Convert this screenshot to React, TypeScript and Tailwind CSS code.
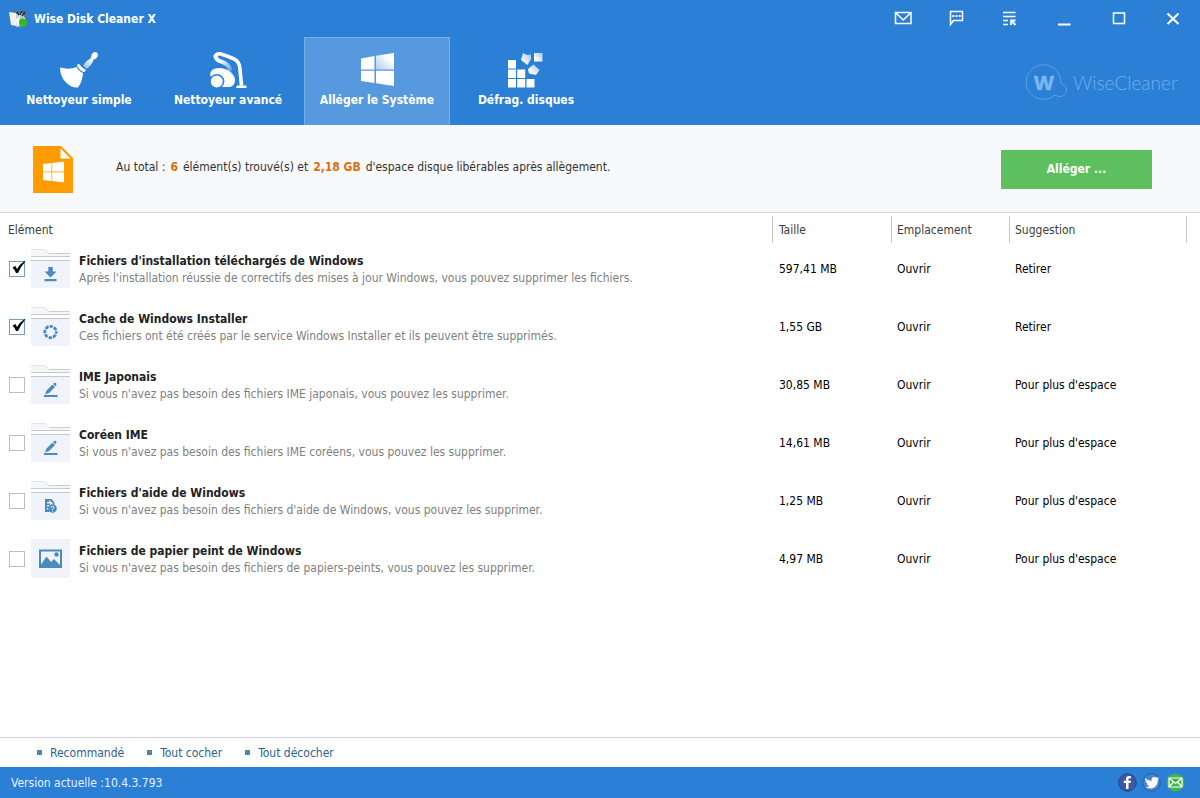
import { useState } from 'react';
import type { ReactNode } from 'react';

const tabs = ['Nettoyeur simple', 'Nettoyeur avancé', 'Alléger le Système', 'Défrag. disques'];

type IconKind = 'download' | 'cache' | 'pen' | 'help' | 'image';

const items: { title: string; text: string; size: string; hint: string; icon: IconKind; recommended: boolean }[] = [
  {
    title: "Fichiers d'installation téléchargés de Windows",
    text: "Après l'installation réussie de correctifs des mises à jour Windows, vous pouvez supprimer les fichiers.",
    size: '597,41 MB',
    hint: 'Retirer',
    icon: 'download',
    recommended: true,
  },
  {
    title: 'Cache de Windows Installer',
    text: 'Ces fichiers ont été créés par le service Windows Installer et ils peuvent être supprimés.',
    size: '1,55 GB',
    hint: 'Retirer',
    icon: 'cache',
    recommended: true,
  },
  {
    title: 'IME Japonais',
    text: "Si vous n'avez pas besoin des fichiers IME japonais, vous pouvez les supprimer.",
    size: '30,85 MB',
    hint: "Pour plus d'espace",
    icon: 'pen',
    recommended: false,
  },
  {
    title: 'Coréen IME',
    text: "Si vous n'avez pas besoin des fichiers IME coréens, vous pouvez les supprimer.",
    size: '14,61 MB',
    hint: "Pour plus d'espace",
    icon: 'pen',
    recommended: false,
  },
  {
    title: "Fichiers d'aide de Windows",
    text: "Si vous n'avez pas besoin des fichiers d'aide de Windows, vous pouvez les supprimer.",
    size: '1,25 MB',
    hint: "Pour plus d'espace",
    icon: 'help',
    recommended: false,
  },
  {
    title: 'Fichiers de papier peint de Windows',
    text: "Si vous n'avez pas besoin des fichiers de papiers-peints, vous pouvez les supprimer.",
    size: '4,97 MB',
    hint: "Pour plus d'espace",
    icon: 'image',
    recommended: false,
  },
];

function AppLogo() {
  return (
    <svg width="19" height="18" viewBox="0 0 19 18" aria-hidden="true">
      <path d="M0 1h18l-1 6 1 9-5 1-10-2z" fill="#5f7389" />
      <path d="M0 2l7 1v13l-5-1z" fill="#f0f0f0" />
      <path d="M7 4l6-1 3 5-2 8-7 1z" fill="#c9ced3" />
      <path d="M8 2l2 3M13 1l-2 4M16 2l-3 4" stroke="#16304f" strokeWidth="1.500" />
      <path d="M7 9l4-2 1 6-4 3z" fill="#fff" />
      <path d="M10 12q0-3 2-4 1-2 3 0 3 1 3 5 0 4-4 4-4 0-4-5z" fill="#35b52c" />
      <path d="M12 9q2-3 4 0" stroke="#c9f3c2" fill="none" />
    </svg>
  );
}

function Broom() {
  return (
    <svg width="40" height="38" viewBox="0 0 40 38" aria-hidden="true">
      <defs>
        <linearGradient id="handle" x1="1" y1="0" x2="0" y2="1">
          <stop offset=".4" stopColor="#fff" />
          <stop offset="1" stopColor="#7fb2ea" />
        </linearGradient>
      </defs>
      <path d="M24 14.500Q27 9.500 31.500 7.500L33 2.800Q35 .5 37.500 1.300 39.800 3 38.500 5.800 37.500 8 34.500 8.800 33 14 27.500 18z" fill="url(#handle)" />
      <path d="M19.500 14.500q2 3.500 5.500 5" stroke="#fff" strokeWidth="3" strokeLinecap="round" fill="none" />
      <path d="M1 16.500q9 2.500 16.500-.5 2.500 4.500 6.500 6-.5 8.500-5 14.500Q12 37 6.500 31 1 25 1 16.500z" fill="#fff" />
    </svg>
  );
}

function Vacuum() {
  return (
    <svg width="40" height="38" viewBox="0 0 40 38" aria-hidden="true">
      <defs>
        <linearGradient id="hose" gradientUnits="userSpaceOnUse" x1="7" y1="5" x2="24" y2="19">
          <stop offset=".3" stopColor="#fff" />
          <stop offset="1" stopColor="#5f9fe3" />
        </linearGradient>
      </defs>
      <path d="M7.500 5Q8 9 13 10.500 21 13 22 18.500" stroke="url(#hose)" strokeWidth="4" fill="none" strokeLinecap="round" />
      <path d="M7.500 6.500Q7 2.500 12 2.700q8 2.300 14.500 5.500 4.500 2.300 5.300 8.300l1.700 18" stroke="#fff" strokeWidth="3.600" fill="none" />
      <path d="M29 34.500h9.500V37h-10.500z" fill="#fff" />
      <path d="M2 24q.5-7 9-7 7 0 12 4.500 5.500 5 3.500 10.500-1.500 4-6 4H9z" fill="#fff" />
      <circle cx="8.800" cy="30.500" r="6.800" fill="#fff" stroke="#2b80d5" strokeWidth="1.600" />
    </svg>
  );
}

function WindowsLogo() {
  return (
    <svg width="40" height="38" viewBox="0 0 40 38" aria-hidden="true">
      <defs>
        <linearGradient id="pane" x1="0" y1="1" x2="1" y2="0">
          <stop offset="0" stopColor="#aacdf2" />
          <stop offset=".7" stopColor="#fff" />
        </linearGradient>
      </defs>
      <path d="M4 7.500L17.500 5v13.500H4zM4 19.700h13.500V32L4 30zM19 19.700h18V35l-18-2.700z" fill="#fff" />
      <path d="M19 4.700L37 2v16.500H19z" fill="url(#pane)" />
    </svg>
  );
}

function Blocks() {
  return (
    <svg width="40" height="38" viewBox="0 0 40 38" aria-hidden="true">
      <defs>
        <linearGradient id="cube" x1="0" y1="1" x2="1" y2="0">
          <stop offset=".2" stopColor="#fff" />
          <stop offset="1" stopColor="#9cc5ef" />
        </linearGradient>
      </defs>
      <path
        d="M2 9h8v8.500H2zM2 18.500h8V27H2zM2 28h8v8.500H2zM11.200 18.500h8V27h-8zM11.200 28h8v8.500h-8zM20.500 28h8v8.500h-8z"
        fill="#fff"
      />
      <path d="M17 2l4.500 2 3.500-.5 0 4.500-3.500 6-6.500-5z" fill="url(#cube)" />
      <path d="M28 2h8.500v8.500H28z" fill="url(#cube)" />
      <path d="M27.500 13.500l6 5.500-3.500 5-7-1.500-1-4.500z" fill="url(#cube)" />
    </svg>
  );
}

const tabIcons: ReactNode[] = [<Broom />, <Vacuum />, <WindowsLogo />, <Blocks />];

function WiseLogo() {
  return (
    <svg width="156" height="40" viewBox="0 0 156 40" role="img" aria-label="WiseCleaner">
      <path
        d="M31 32A17.300 17.300 0 1 1 36.800 19q0 1.500 1.200 2.300 4.500 1.200 4.500 5.700-.5 6-6.500 6.500-3 .3-5-1.500z"
        fill="none"
        stroke="#5c9fe4"
      />
      <text x="10" y="27" fill="#7db5ef" stroke="#7db5ef" strokeWidth=".6" fontFamily="Liberation Sans, sans-serif" fontWeight="700" fontSize="21">
        W
      </text>
      <text x="49" y="27" fill="#6fadee" fontFamily="Lato, sans-serif" fontWeight="300" fontSize="19">
        WiseCleaner
      </text>
    </svg>
  );
}

const line = { fill: 'none', stroke: '#fff', strokeWidth: 1.5 };

const windowButtons: { label: string; drawing: ReactNode }[] = [
  {
    label: 'Courrier',
    drawing: <path d="M2.500 3.500h15.500v11H2.500zM3 4l7.200 7L17.500 4" {...line} />,
  },
  {
    label: 'Commentaires',
    drawing: (
      <>
        <path d="M3.500 15.500v-13h12v9H6.500z" {...line} />
        <path d="M5.300 6h2v2h-2zM8.500 6h2v2h-2zM11.700 6h2v2h-2z" fill="#fff" />
      </>
    ),
  },
  {
    label: 'Menu',
    drawing: (
      <>
        <path d="M2 3.500h12.500M2 7.500h12.500M2 11.500h5M2 15.500h5" {...line} />
        <path d="M10 16v-4.500h4.500M10.500 12l4 4" {...line} strokeWidth="1.800" />
      </>
    ),
  },
  { label: 'Réduire', drawing: <path d="M3 14.500h12.500v2H3z" fill="#fff" /> },
  { label: 'Agrandir', drawing: <path d="M4.500 4h11v10.500h-11z" {...line} /> },
  { label: 'Fermer', drawing: <path d="M4.500 4.500l11 10.500M15.500 4.500l-11 10.500" {...line} strokeWidth="2" /> },
];

function ItemIcon({ kind }: { kind: IconKind }) {
  const blue = '#4b8abf';
  return (
    <svg className="block shrink-0" width="39" height="39" viewBox="0 0 39 39" aria-hidden="true">
      {kind === 'image' ? (
        <>
          <path d="M0 0h39v39H0z" fill="#f0f4fa" />
          <path fillRule="evenodd" d="M8 10.500h23V29H8zM10 12.500v14h19v-14z" fill={blue} />
          <path d="M10 25.500l5.500-8 4.500 5.500 3-3 6 6v1.500H10z" fill={blue} />
          <circle cx="25.500" cy="15.500" r="2.200" fill={blue} />
        </>
      ) : (
        <>
          <path d="M0 .5h14.500l3.500 4h21v3H0z" fill="#f5f6f8" />
          <path d="M0 .5h14.500l3.500 4" fill="none" stroke="#e3e5e8" />
          <path d="M18 4.500h21" stroke="#c9ccd0" />
          <path d="M0 12h39v27H0z" fill="#f0f4fa" />
          <path d="M0 7.500h39M0 11.500h39" stroke="#c5c8cc" />
        </>
      )}
      {kind === 'download' && <path d="M17.300 18h4.500v4.500h3.700l-6 6-6-6h3.800zM13.500 30h12v2.200h-12z" fill={blue} />}
      {kind === 'cache' && (
        <circle cx="19.500" cy="25" r="5.700" fill="none" stroke={blue} strokeWidth="2.800" strokeDasharray="3.400 1.080" strokeDashoffset="1.700" />
      )}
      {kind === 'pen' && (
        <>
          <path d="M13 30h13.500v2H13z" fill={blue} />
          <path d="M14 29.500l1.500-4 6-6 2.500 2.500-6 6zM22.200 18.800l1.300-1.100q1.500-.3 2 1l-.3 1.500-1 1z" fill={blue} />
        </>
      )}
      {kind === 'help' && (
        <>
          <path fillRule="evenodd" d="M14 18h6.500l3 3.500v2h-2V21h-2v-1.500H18V21h-2v1.500h3V24h-3v1.500h2V27h-2v1.500h1.500L18.500 31H14z" fill={blue} />
          <circle cx="21.500" cy="27.500" r="4.300" fill={blue} />
          <path d="M20 26.800q0-1.500 1.500-1.500t1.500 1.300q0 .8-1.500 1.600v.6M21.500 29.500v1" fill="none" stroke="#f0f4fa" />
        </>
      )}
    </svg>
  );
}

function Socials() {
  return (
    <div className="flex items-center gap-[5px]">
      <a href="#facebook" aria-label="Facebook">
        <svg className="block" width="19" height="19" viewBox="0 0 19 19">
          <circle cx="9.500" cy="9.500" r="8.800" fill="#3d58a3" stroke="#24468c" />
          <path d="M8 16V10H5.800V7.800H8V6q0-3 3-3h2v2.300h-1.500q-1 0-1 1v1.500H13l-.4 2.200h-2.100v6z" fill="#fff" />
        </svg>
      </a>
      <a href="#twitter" aria-label="Twitter">
        <svg className="block" width="19" height="19" viewBox="0 0 19 19">
          <circle cx="9.500" cy="9.500" r="8.800" fill="#4682cf" stroke="#275ea9" />
          <path
            d="M3 5q3 3 6.500 3-.5-3.800 3-4 1.500 0 2.300.8L17 4.300 15.800 6l1.200-.2L15.800 7.500q0 6-5.500 7.800-4 .8-7-1.200 2.500 0 4-1.200-2-.3-2.600-2h1.200Q3.700 10 3.500 8l1.200.3Q2.500 6.800 3 5z"
            fill="#fff"
          />
        </svg>
      </a>
      <a href="#mail" aria-label="E-mail">
        <svg className="block" width="19" height="19" viewBox="0 0 19 19">
          <circle cx="9.500" cy="9.500" r="9" fill="#42b649" />
          <path d="M3 5h13v9H3zM3 5l6.500 5.500L16 5M3 14l4.500-5M16 14l-4.500-5" fill="none" stroke="#fff" strokeWidth="1.200" />
        </svg>
      </a>
    </div>
  );
}

export default function App() {
  const [active, setActive] = useState(2);
  const [checked, setChecked] = useState(items.map((item) => item.recommended));

  const footerActions = [
    { label: 'Recommandé', run: () => setChecked(items.map((item) => item.recommended)) },
    { label: 'Tout cocher', run: () => setChecked(items.map(() => true)) },
    { label: 'Tout décocher', run: () => setChecked(items.map(() => false)) },
  ];

  return (
    <div className="flex min-h-screen flex-col bg-white font-['DejaVu_Sans_Condensed','DejaVu_Sans',sans-serif] text-xs text-black">
      <header className="bg-[#2b80d5] text-white">
        <div className="flex h-[37px] items-center justify-between pr-[17px] pl-[9px]">
          <div className="flex items-center gap-[6px]">
            <AppLogo />
            <h1 className="font-bold">Wise Disk Cleaner X</h1>
          </div>
          <div className="flex gap-[34px]">
            {windowButtons.map((button) => (
              <button key={button.label} type="button" aria-label={button.label}>
                <svg className="block" width="20" height="20" viewBox="0 0 20 20">
                  {button.drawing}
                </svg>
              </button>
            ))}
          </div>
        </div>
        <div className="flex justify-between pr-[20px] pl-[6px]">
          <nav className="flex gap-[3px]">
            {tabs.map((tab, index) => (
              <button
                key={tab}
                type="button"
                onClick={() => setActive(index)}
                className={
                  index === active
                    ? 'flex h-[88px] w-[146px] flex-col items-center border border-b-0 border-[#78aee6] bg-[#5799df] pt-[13px] font-bold'
                    : 'flex h-[88px] w-[146px] flex-col items-center border border-b-0 border-transparent pt-[13px] font-bold'
                }
              >
                {tabIcons[index]}
                <span className="mt-[3px] whitespace-nowrap">{tab}</span>
              </button>
            ))}
          </nav>
          <div className="pt-[26px]">
            <WiseLogo />
          </div>
        </div>
      </header>

      <section className="flex h-[88px] items-center border-b border-[#d3d7dc] bg-[#f8f9fc] pt-px pr-[48px] pl-[33px]">
        <svg className="shrink-0" width="40" height="47" viewBox="0 0 40 47" aria-hidden="true">
          <path d="M0 0h28l12 12v35H0z" fill="#ff9d00" />
          <path d="M27.500 2.500L37.500 12.500h-10z" fill="#fff" />
          <path d="M10 18l8.500-1v8.500H10zM19.200 16.900L31 15.500v10H19.200zM10 26.200h8.500v8.700L10 34zM19.200 26.200H31v10.300l-11.800-1.500z" fill="#fff" />
        </svg>
        <p className="mb-[4px] ml-[43px] grow text-[#333]">
          Au total :
          <strong className="mx-[5px] text-[#dc6f0d]">6</strong>
          élément(s) trouvé(s) et
          <strong className="mx-[5px] text-[#dc6f0d]">2,18 GB</strong>
          d'espace disque libérables après allègement.
        </p>
        <button type="button" className="h-[39px] w-[151px] bg-[#5dbf5d] font-bold text-white">
          Alléger ...
        </button>
      </section>

      <main className="grow pr-[13px]">
        <table className="w-full table-fixed border-collapse text-left">
          <colgroup>
            <col />
            <col className="w-[119px]" />
            <col className="w-[118px]" />
            <col className="w-[178px]" />
          </colgroup>
          <thead className="text-[#3c3c3c]">
            <tr>
              <th className="p-0 pt-[3px] font-normal">
                <div className="flex h-[27px] items-center pl-[8px]">Elément</div>
              </th>
              <th className="p-0 pt-[3px] font-normal">
                <div className="flex h-[27px] items-center border-l border-[#c6cad0] pl-[6px]">Taille</div>
              </th>
              <th className="p-0 pt-[3px] font-normal">
                <div className="flex h-[27px] items-center border-l border-[#c6cad0] pl-[5px]">Emplacement</div>
              </th>
              <th className="p-0 pt-[3px] font-normal">
                <div className="flex h-[27px] items-center border-x border-[#c6cad0] pl-[5px]">Suggestion</div>
              </th>
            </tr>
          </thead>
          <tbody>
            {items.map((item, index) => (
              <tr key={item.title} className="h-[58px]">
                <td className="p-0 pb-[7px] pl-[9px]">
                  <label className="flex items-center gap-[6px]">
                    <span className="relative flex">
                      <input
                        type="checkbox"
                        checked={checked[index]}
                        onChange={() => setChecked(checked.map((value, i) => (i === index ? !value : value)))}
                        className="size-[16px] appearance-none border border-[#bdbdbd] bg-white checked:border-[#6f9ecb]"
                      />
                      {checked[index] && (
                        <svg className="pointer-events-none absolute top-0 left-0" width="17" height="16" viewBox="0 0 17 16">
                          <path d="M3.500 6.500L6.500 5l1.500 3Q11 3 15.800-.2l.4.700Q11.500 6 9 12H7Q6 9 3.500 6.500z" fill="#000" />
                        </svg>
                      )}
                    </span>
                    <ItemIcon kind={item.icon} />
                    <span className="ml-[3px] flex flex-col pt-[3px] leading-[17px]">
                      <span className="font-bold text-[#222]">{item.title}</span>
                      <span className="text-[#808080]">{item.text}</span>
                    </span>
                  </label>
                </td>
                <td className="p-0 pb-[7px] pl-[7px]">{item.size}</td>
                <td className="p-0 pb-[7px] pl-[6px]">
                  <a href="#ouvrir">Ouvrir</a>
                </td>
                <td className="p-0 pb-[7px] pl-[6px]">{item.hint}</td>
              </tr>
            ))}
          </tbody>
        </table>
      </main>

      <div className="flex h-[30px] items-center gap-[23px] border-t border-[#cfd2d6] pl-[37px]">
        {footerActions.map((action) => (
          <button key={action.label} type="button" onClick={action.run} className="flex items-center gap-[8px] text-[#2c628f]">
            <span className="size-[5px] bg-[#5285ad]" />
            {action.label}
          </button>
        ))}
      </div>
      <footer className="flex h-[31px] items-center justify-between bg-[#2b80d5] pr-[15px] pl-[11px] text-[#e4f1ff]">
        <span>Version actuelle :10.4.3.793</span>
        <Socials />
      </footer>
    </div>
  );
}
